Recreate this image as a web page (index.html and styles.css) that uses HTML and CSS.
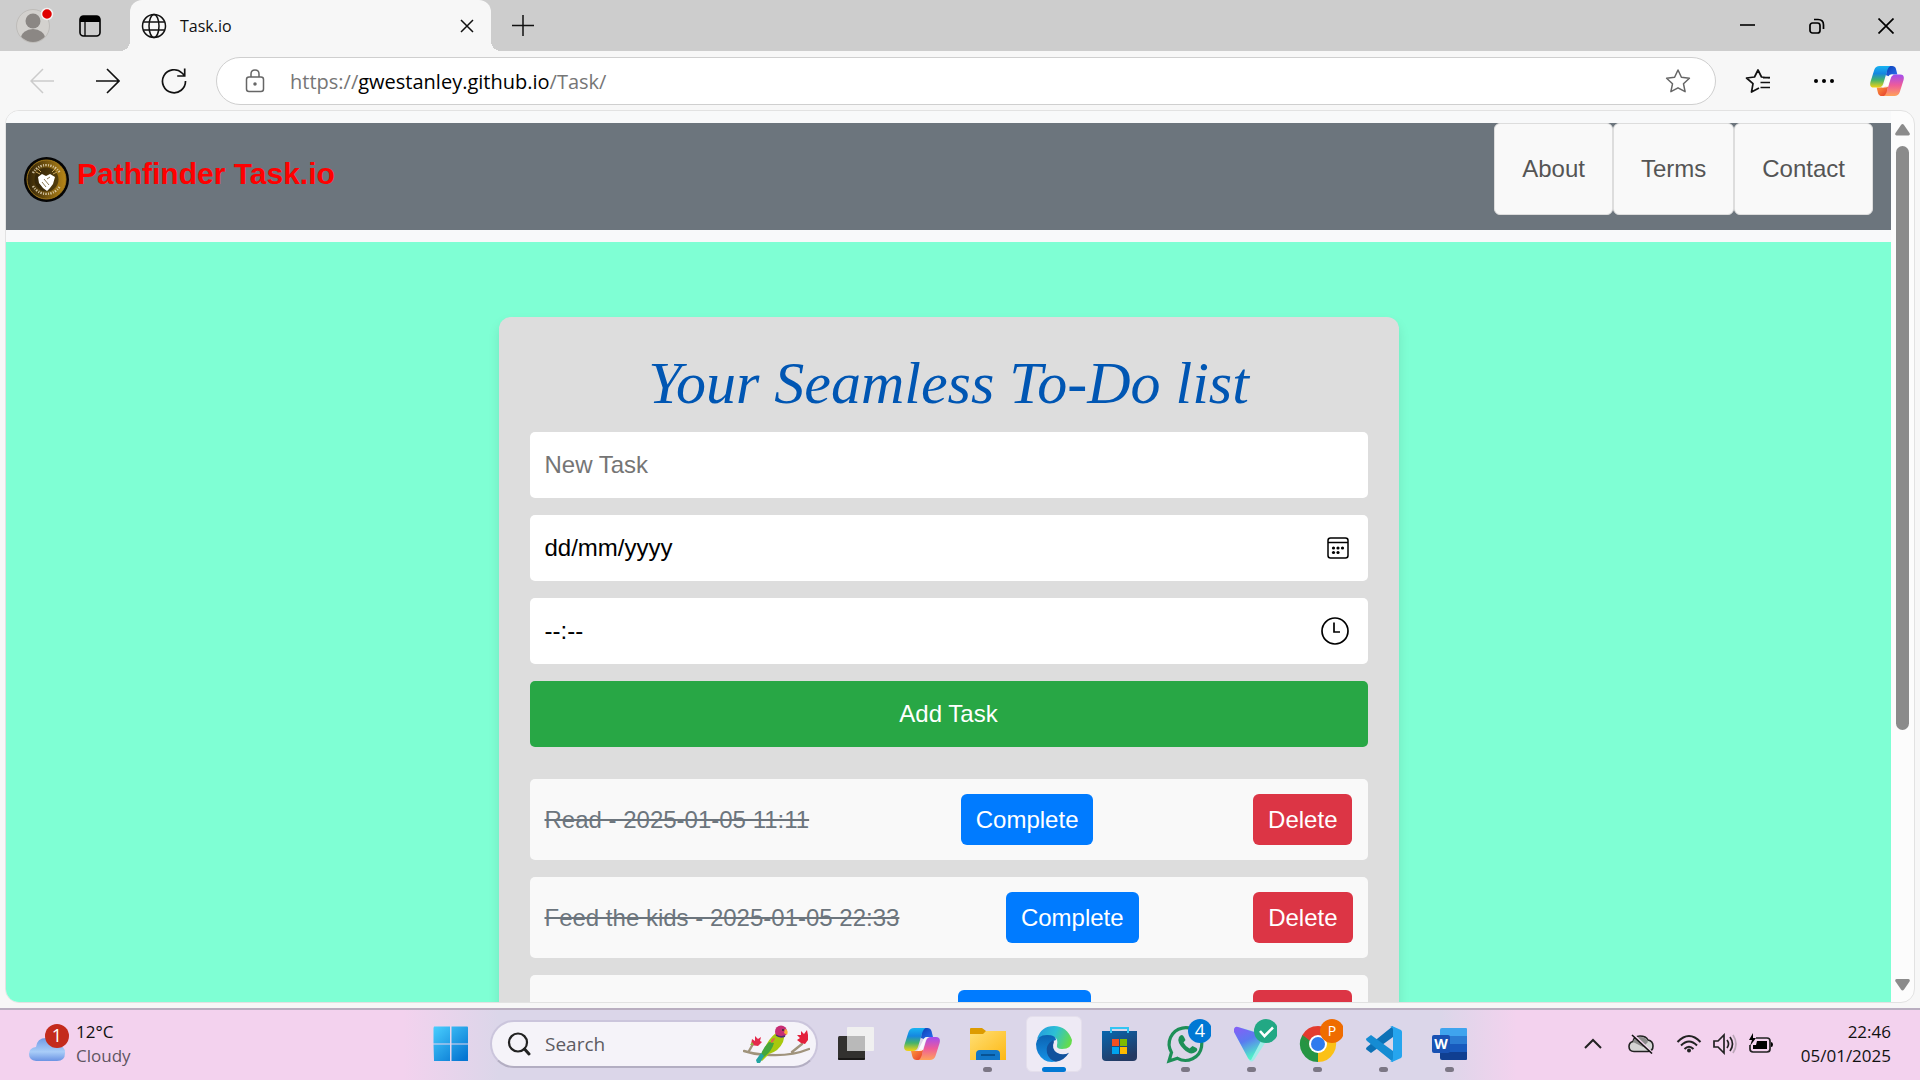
FILE: index.html
```html
<!DOCTYPE html>
<html lang="en-GB">
<head>
<meta charset="utf-8">
<meta name="viewport" content="width=device-width, initial-scale=1">
<title>Task.io</title>
<link rel="stylesheet" href="styles.css">
</head>
<body>
<svg class="defs" width="0" height="0" aria-hidden="true">
  <defs>
    <linearGradient id="cpA" x1="0" y1="0" x2="0" y2="1"><stop offset="0" stop-color="#18b4f2"/><stop offset=".35" stop-color="#1587e0"/><stop offset=".65" stop-color="#45b36b"/><stop offset="1" stop-color="#f5d313"/></linearGradient>
    <linearGradient id="cpB" x1="0" y1="0" x2="0" y2="1"><stop offset="0" stop-color="#a24df0"/><stop offset=".5" stop-color="#ee5b9a"/><stop offset="1" stop-color="#ffa35a"/></linearGradient>
    <linearGradient id="cpC" x1="0" y1="0" x2="1" y2="1"><stop offset="0" stop-color="#0c3fb4"/><stop offset="1" stop-color="#2a6ff0"/></linearGradient>
    <linearGradient id="cpD" x1="0" y1="0" x2="1" y2="1"><stop offset="0" stop-color="#ff9d3c"/><stop offset="1" stop-color="#e5392e"/></linearGradient>
    <symbol id="copilot" viewBox="0 0 36 34">
      <path d="M18 1h5.500q3 0 4 3l1.500 6h-6q-2 0-3 2l-3-1z" fill="url(#cpC)"/>
      <path d="M18 33h-5.500q-3 0-4-3L7 24h6q2 0 3-2l3 1z" fill="url(#cpD)"/>
      <path d="M10 1h11.500q-2 1-3 4L14 20q-1.300 4-5 4H4q-5 0-3.600-6L4.500 5Q6 1 10 1z" fill="url(#cpA)"/>
      <path d="M26 33H14.500q2-1 3-4L22 14q1.300-4 5-4h5q5 0 3.600 6l-4.100 13q-1.500 4-5.500 4z" fill="url(#cpB)"/>
      <path d="M20 11.500q.5-1.500 3-1.500h2q-2.500.5-3.500 4L19 22.500q-.5 1.500-3 1.500h-3.500q2-.5 3.200-4z" fill="#fff" opacity=".85"/>
    </symbol>
  </defs>
</svg>

<header class="tabstrip">
  <button class="profile" aria-label="Profile">
    <svg width="38" height="38" viewBox="0 0 38 38"><clipPath id="pc"><circle cx="17" cy="21" r="16"/></clipPath><circle cx="17" cy="21" r="16.500" fill="#d3d1ce" stroke="#bebcb9"/><g clip-path="url(#pc)" fill="#8b8784"><circle cx="17" cy="16" r="7.500"/><ellipse cx="17" cy="33" rx="12" ry="9"/></g><circle cx="31" cy="9" r="5.500" fill="#e00000" stroke="#f2f2f2" stroke-width="1.500"/></svg>
  </button>
  <button class="tabmenu" aria-label="Tab actions">
    <svg width="22" height="22" viewBox="0 0 22 22"><rect x="1" y="1" width="20" height="20" rx="3.500" fill="none" stroke="#000" stroke-width="1.600"/><path d="M1 7V4q0-3 3-3h14q3 0 3 3v3z"/><path d="M6 6v15" stroke="#000" stroke-width="1.300"/></svg>
  </button>
  <div class="tab">
    <svg width="26" height="26" viewBox="0 0 26 26" fill="none" stroke="#111" stroke-width="1.500"><circle cx="13" cy="13" r="11.500"/><ellipse cx="13" cy="13" rx="5" ry="11.500"/><path d="M2.500 9h21M2.500 17h21"/></svg>
    <span class="tab-title">Task.io</span>
    <button class="tab-close" aria-label="Close tab"><svg width="14" height="14" viewBox="0 0 14 14" stroke="#111" stroke-width="1.500"><path d="M1 1l12 12M13 1L1 13"/></svg></button>
  </div>
  <button class="newtab" aria-label="New tab"><svg width="22" height="22" viewBox="0 0 22 22" stroke="#111" stroke-width="1.500"><path d="M11 0v21M0 10.500h22"/></svg></button>
  <div class="winctl">
    <button aria-label="Minimise"><svg width="16" height="16" viewBox="0 0 16 16" stroke="#000" stroke-width="1.600"><path d="M0 7h15"/></svg></button>
    <button aria-label="Restore"><svg width="16" height="16" viewBox="0 0 16 16" fill="none" stroke="#000" stroke-width="1.700"><rect x="1" y="5" width="10" height="10" rx="2.500"/><path d="M5 1.500h4q5.500 0 5.500 5.500v4"/></svg></button>
    <button aria-label="Close window"><svg width="16" height="16" viewBox="0 0 16 16" stroke="#000" stroke-width="1.700"><path d="M.5.500l15 15M15.500.500l-15 15"/></svg></button>
  </div>
</header>

<nav class="toolbar" aria-label="Browser">
  <button class="tool" aria-label="Back"><svg width="24" height="26" viewBox="0 0 24 26" fill="none" stroke="#cbcbcb" stroke-width="1.500"><path d="M24 13H1M13 1L1 13l12 12"/></svg></button>
  <button class="tool" aria-label="Forward"><svg width="24" height="26" viewBox="0 0 24 26" fill="none" stroke="#111" stroke-width="1.600"><path d="M0 13h23M11 1l12 12-12 12"/></svg></button>
  <button class="tool" aria-label="Reload"><svg width="26" height="26" viewBox="0 0 26 26" fill="none" stroke="#111" stroke-width="1.700"><path d="M24.500 13A11.500 11.500 0 1 1 21 5l2.500 2.500M23.700.500v7.500h-7.500"/></svg></button>
  <div class="address">
    <svg width="20" height="24" viewBox="0 0 20 24" fill="none" stroke="#666" stroke-width="1.500"><rect x="1.500" y="8" width="17" height="14.500" rx="2.500"/><path d="M6 8V5q0-4 4-4t4 4v3"/><circle cx="10" cy="15" r="1" fill="#666"/></svg>
    <span class="url">https://<b>gwestanley.github.io</b>/Task/</span>
    <button class="fav" aria-label="Add to favourites"><svg width="26" height="26" viewBox="0 0 26 26" fill="none" stroke="#666" stroke-width="1.500" stroke-linejoin="round"><path d="M13 2l3.400 7.300 8 1-5.900 5.500 1.600 7.900L13 19.800l-7.100 3.900 1.600-7.900-5.900-5.500 8-1z"/></svg></button>
  </div>
  <button class="tool" aria-label="Favourites"><svg width="26" height="26" viewBox="0 0 26 26" fill="none" stroke="#111" stroke-width="1.700" stroke-linejoin="round"><path d="M14 20l-7.500 4 1.500-8.300L1.500 10l8-1L13 2l3.500 7 8 1M15.500 14.500H25M15.500 19.500H25M18 9.700h7"/></svg></button>
  <button class="tool" aria-label="Settings and more"><svg width="22" height="6" viewBox="0 0 22 6"><circle cx="3" cy="3" r="2"/><circle cx="11" cy="3" r="2"/><circle cx="19" cy="3" r="2"/></svg></button>
  <button class="tool tool-copilot" aria-label="Copilot"><svg width="34" height="32"><use href="#copilot"/></svg></button>
</nav>

<div class="frame">
  <div class="page">
    <header class="site-head">
      <a class="brand" href="#home">
        <svg width="45" height="45" viewBox="0 0 45 45">
          <defs><linearGradient id="gold"><stop offset="0" stop-color="#2e2108"/><stop offset="1" stop-color="#b88717"/></linearGradient></defs>
          <circle cx="22.500" cy="22.500" r="22.500" fill="#050505"/><circle cx="22.500" cy="22.500" r="19.500" fill="url(#gold)" stroke="#a37a1c"/><circle cx="22.500" cy="22.500" r="12" fill="#241a08" opacity=".6"/>
          <path d="M9 16A15.500 15.500 0 0 1 36 16M9 29a15.500 15.500 0 0 0 27 0" fill="none" stroke="#e8dcc0" stroke-width="2.400" stroke-dasharray="1.500 1.300 1 1.200" opacity=".8"/>
          <path d="M14 20l4-3 4 2 4-2 5 3-2 7-3 4-3 3-4-3-4-5z" fill="#fff"/><path d="M18 25l4 5M20 22l5 6M26 20l-3 2" stroke="#8b7a55"/>
          <path d="M12 15l4 2M33 15l-4 2M14 12l3 3M31 12l-3 3" stroke="#c8a55a"/>
        </svg>
        <span>Pathfinder Task.io</span>
      </a>
      <nav class="site-nav" aria-label="Site">
        <a href="#about">About</a>
        <a href="#terms">Terms</a>
        <a href="#contact">Contact</a>
      </nav>
    </header>
    <main class="site-main">
      <section class="card">
        <h1>Your Seamless To-Do list</h1>
        <form class="task-form">
          <div class="field"><input type="text" placeholder="New Task" aria-label="New task"></div>
          <div class="field">
            <input class="dark" type="text" placeholder="dd/mm/yyyy" aria-label="Date">
            <button type="button" aria-label="Show date picker"><svg width="22" height="22" viewBox="0 0 22 22"><rect x="1" y="1" width="20" height="20" rx="2.500" fill="none" stroke="#000" stroke-width="1.500"/><path d="M1 5.500h20" stroke="#000" stroke-width="1.500"/><circle cx="6.500" cy="11" r="1.600"/><circle cx="11" cy="11" r="1.600"/><circle cx="15.500" cy="11" r="1.600"/><circle cx="6.500" cy="15.500" r="1.600"/><circle cx="11" cy="15.500" r="1.600"/></svg></button>
          </div>
          <div class="field">
            <input class="dark" type="text" placeholder="--:--" aria-label="Time">
            <button type="button" aria-label="Show time picker"><svg width="28" height="28" viewBox="0 0 28 28" fill="none" stroke="#000" stroke-width="1.700"><circle cx="14" cy="14" r="13"/><path d="M13 5.500V15h6"/></svg></button>
          </div>
          <button class="add" type="button">Add Task</button>
        </form>
        <ul class="tasks">
          <li><span>Read - 2025-01-05 11:11</span><button class="btn done">Complete</button><button class="btn del">Delete</button></li>
          <li><span>Feed the kids - 2025-01-05 22:33</span><button class="btn done">Complete</button><button class="btn del">Delete</button></li>
          <li><span>Walk - 2025-01-05 11:11</span><button class="btn done">Complete</button><button class="btn del">Delete</button></li>
        </ul>
      </section>
    </main>
  </div>
  <div class="scroll" aria-hidden="true">
    <svg width="15" height="12" viewBox="0 0 15 12" fill="#8b8b8b"><path d="M6 1q1.500-2 3 0l5.500 8q1 2-1 2.500h-12q-2-.5-1-2.500z"/></svg>
    <div class="track"><div class="thumb"></div></div>
    <svg width="15" height="12" viewBox="0 0 15 12" fill="#8b8b8b"><path d="M6 10.500q1.500 2 3 0l5.500-8q1-2-1-2.500h-12q-2 .5-1 2.500z"/></svg>
  </div>
</div>

<footer class="taskbar">
  <div class="weather">
    <svg width="44" height="44" viewBox="0 0 44 44"><defs><linearGradient id="cl" x1="0" y1="0" x2="0" y2="1"><stop offset="0" stop-color="#6f9ae6"/><stop offset=".6" stop-color="#a9cdf8"/><stop offset="1" stop-color="#6a93e3"/></linearGradient></defs><path d="M8 39q-7-1-7-7t7-7q1-9 10-9t10 7q9 0 9 8t-8 8z" fill="url(#cl)"/><circle cx="29" cy="14" r="12" fill="#c42b1c"/><text class="badge-text" x="29" y="20">1</text></svg>
    <div class="weather-text"><span>12°C</span><span class="muted">Cloudy</span></div>
  </div>
  <div class="dock">
    <button class="app" aria-label="Start"><svg width="36" height="36" viewBox="0 0 36 36"><defs><linearGradient id="win" gradientUnits="userSpaceOnUse" x1="0" y1="0" x2="30" y2="34"><stop offset="0" stop-color="#4ad0ff"/><stop offset="1" stop-color="#0676d2"/></linearGradient></defs><path fill="url(#win)" d="M1 .5h16v17H.500V2zM18.500.500h16l.5 1v16H18.500zM.5 18.500H17V35H1zM18.500 18.500H35V35H18.500z"/></svg></button>
    <label class="search">
      <svg width="24" height="24" viewBox="0 0 24 24" fill="none" stroke="#222" stroke-linecap="round"><circle cx="11" cy="10.500" r="9" stroke-width="2.200"/><path d="M17.500 17l4.500 5" stroke-width="3"/></svg>
      <input type="search" placeholder="Search" aria-label="Search">
      <svg width="67" height="38" viewBox="0 0 67 38">
        <path d="M1 26q12 4 26 4 22 1 39-6M49 27l10-8M6 26l4-7" fill="none" stroke="#a0937c" stroke-width="2.400" stroke-linecap="round"/>
        <path d="M8 20l1-6 3 2 0-5 3 3 3-2-1 4 2 1-4 4z" fill="#e42a4c"/><path d="M7 20l2-3 2 3z" fill="#8db843"/>
        <path d="M58 18l-4-3 3-2-3-3 4 0 0-4 3 3 3-4 1 5 0 5-3 4z" fill="#e3203c"/>
        <path d="M33 8q-8 6-12 17l-5 9 3 2 7-7q10-3 14-12l2-8z" fill="#a8c80e"/><path d="M26 17q-7 7-8 13l-3 6 6-4q8-6 10-14z" fill="#44a63c"/><path d="M18 28l-5 7 1 3h3l4-7z" fill="#23a5a2"/><path d="M28 16q1-3 4-3-1 4-4 5z" fill="#e0654c"/>
        <circle cx="38" cy="6.500" r="6" fill="#c72d74"/><path d="M33 10q4 3 9 1" stroke="#493073" stroke-width="1.500" fill="none"/><path d="M42 4q4 1 2 6l-3-2z" fill="#f9b038"/><circle cx="40" cy="5" r="1" fill="#333"/>
      </svg>
    </label>
    <button class="app" aria-label="Task view"><svg width="36" height="36" viewBox="0 0 36 36"><rect y="10" width="27" height="24" rx="1.500" fill="#32312f"/><rect x="9" y="1" width="27" height="24" rx="1" fill="#f0f0f0"/><path d="M9 10h18v15H9z" fill="#b9b9b9"/><path d="M0 33h27" stroke="#000"/></svg></button>
    <button class="app" aria-label="Copilot"><svg width="36" height="34"><use href="#copilot"/></svg></button>
    <button class="app open" aria-label="File Explorer"><svg width="36" height="36" viewBox="0 0 36 36"><defs><linearGradient id="fo" x2="1" y2="1"><stop offset="0" stop-color="#ffdf75"/><stop offset="1" stop-color="#fdb813"/></linearGradient></defs><path d="M0 3q0-1 1-1h11l4 3h20v7H0z" fill="#dd9b00"/><path d="M0 8h13l3-3h20v29H0z" fill="url(#fo)"/><path d="M6 34V28q0-4 4-4h16q4 0 4 4v6z" fill="#1176c8"/><path d="M11 29h14" stroke="#064a86" stroke-width="1.600"/></svg></button>
    <button class="app open active" aria-label="Microsoft Edge"><svg width="36" height="36" viewBox="0 0 36 36"><defs><linearGradient id="eg" x1="0" y1=".2" x2="1" y2=".5"><stop offset="0" stop-color="#2499df"/><stop offset=".5" stop-color="#2dc0d5"/><stop offset="1" stop-color="#64dc4b"/></linearGradient><linearGradient id="eb" x1="0" y1="0" x2="0" y2="1"><stop offset="0" stop-color="#0b62b2"/><stop offset="1" stop-color="#1692e6"/></linearGradient></defs><path d="M1 13Q5 0 18 0t18 14q0 9-10 9-6 0-5-4 2-9-8-9Q6 10 1 13z" fill="url(#eg)"/><path d="M0 18Q1 9 11 9q9 0 9 5-6 1-7 9-1 8 7 12.500Q8 38 2 27 0 23 0 18z" fill="url(#eb)"/><path d="M17 14q-8 5-6 13 2 7 9 8.800 8-1 13-9-6 3-12 0-6-4-3-11z" fill="#11519d"/></svg></button>
    <button class="app" aria-label="Microsoft Store"><svg width="36" height="36" viewBox="0 0 36 36"><defs><linearGradient id="st" x2=".5" y2="1"><stop offset="0" stop-color="#0867af"/><stop offset="1" stop-color="#243a63"/></linearGradient></defs><path d="M0 5h35v26q0 4-4 4H4q-4 0-4-4z" fill="url(#st)"/><path d="M9 7V2h17v5" fill="none" stroke="#33c5f3" stroke-width="2"/><path d="M10 13h7v7h-7z" fill="#f25022"/><path d="M18 13h7v7h-7z" fill="#7fba00"/><path d="M10 21h7v7h-7z" fill="#00a4ef"/><path d="M18 21h7v7h-7z" fill="#ffb900"/></svg></button>
    <button class="app open" aria-label="WhatsApp"><svg width="50" height="50" viewBox="0 0 50 50"><path d="M8 42l2.500-8.500a16.300 16.300 0 1 1 6 5.800z" fill="none" stroke="#1d8f57" stroke-width="3.200"/><path d="M18 18q3-4 5 0l1.500 3-2 2.500q2 4 6 6l3-2.500 4 2q2 2-1 4-5 4-12-3-7-7-4.500-12z" fill="#1d8f57"/><circle cx="39" cy="12" r="12" fill="#0078d4"/><text class="badge-text" x="39" y="18">4</text></svg></button>
    <button class="app open" aria-label="VPN"><svg width="50" height="50" viewBox="0 0 50 50"><defs><linearGradient id="vp" x2=".4" y2="1"><stop offset="0" stop-color="#8a5cf7"/><stop offset=".5" stop-color="#5a7bf0"/><stop offset="1" stop-color="#4ff0c8"/></linearGradient></defs><path d="M7 10q1-3 4-2l26 7q5 2 3 6L27 41q-3 3-5 0L7 13z" fill="#9deee8"/><path d="M7 10q1-3 4-2l23 7q3 2 1 5L24 41q-2 0-3-2L7 13z" fill="url(#vp)"/><circle cx="39" cy="12" r="12" fill="#22a884"/><path d="M33 12l4.500 5 8.500-8.500" fill="none" stroke="#fff" stroke-width="2.600"/></svg></button>
    <button class="app open" aria-label="Google Chrome"><svg width="50" height="50" viewBox="0 0 50 50"><path d="M25 25L9.400 16A18 18 0 0 1 40.600 16z" fill="#e33b2e"/><path d="M25 25l15.600-9A18 18 0 0 1 25 43z" fill="#fbc116"/><path d="M25 25v18A18 18 0 0 1 9.400 16z" fill="#259543"/><path d="M25 16h15.600L31 25zM17 29L9.400 16 22 18z" fill="#e33b2e"/><path d="M9.400 16L17 29.500l5-4z" fill="#259543"/><path d="M25 43l8-14-6-3z" fill="#fbc116"/><circle cx="25" cy="25" r="9" fill="#fff"/><circle cx="25" cy="25" r="7" fill="#2e7bee"/><circle cx="39" cy="12" r="12" fill="#ef6c00"/><text class="badge-text small" x="39" y="17">P</text></svg></button>
    <button class="app open" aria-label="Visual Studio Code"><svg width="36" height="36" viewBox="0 0 36 36"><path d="M27 0v11L5 27l-4-3q-2-1 0-3z" fill="#0c71b6"/><path d="M27 36V25L5 9 1 12q-2 1 0 3z" fill="#158cd3"/><path d="M26 0l9 4q1 1 1 2v24q0 1-1 2l-9 4-2-1q3 0 3-3V4q0-3-3-3z" fill="#26a5ee"/></svg></button>
    <button class="app open" aria-label="Word"><svg width="36" height="36" viewBox="0 0 36 36"><path d="M8 4q0-2 2-2h24q1 0 1 1v7H8z" fill="#3fa4ee"/><path d="M8 10h27v8H8z" fill="#2b7cd3"/><path d="M8 18h27v8H8z" fill="#185abd"/><path d="M8 26h27v7q0 1-1 1H10q-2 0-2-2z" fill="#103f91"/><rect y="9" width="18" height="18" rx="2" fill="#1952b3"/><text class="word-text" x="9" y="23">W</text></svg></button>
  </div>
  <div class="tray">
    <button aria-label="Show hidden icons"><svg width="18" height="12" viewBox="0 0 18 12" fill="none" stroke="#222" stroke-width="2"><path d="M1 10l8-8 8 8"/></svg></button>
    <button aria-label="OneDrive"><svg width="26" height="20" viewBox="0 0 26 20"><path d="M6 17.500q-5 0-5-5 0-4 4-5Q6 2 12 2t8 4q5 1 5 6 0 5-5 5.500z" fill="#d4d4d4" stroke="#222" stroke-width="1.600"/><path d="M5 8q1-5 7-5t8 5l-5 5z" fill="#8b8b8b"/><path d="M5 0l19 18.500" stroke="#f3d3ee" stroke-width="2"/><path d="M4 1l20 18.500" stroke="#111" stroke-width="1.600"/></svg></button>
    <button aria-label="Network"><svg width="26" height="20" viewBox="0 0 26 20" fill="none" stroke="#222" stroke-width="2"><path d="M1.500 8q11.500-12 23 0M5 11.500q8-8 16 0M8.500 15q4.500-4.500 9 0"/><circle cx="13" cy="16.500" r="2" fill="#222" stroke="none"/></svg></button>
    <button aria-label="Volume"><svg width="24" height="22" viewBox="0 0 24 22" fill="none" stroke="#222" stroke-width="1.700"><path d="M1 8h4l6-6v18l-6-6H1zM14 7q3 4 0 8M17 4q5 7 0 14"/><path d="M20 2q6 9 0 18" stroke="#bba7b8"/></svg></button>
    <button aria-label="Battery"><svg width="26" height="22" viewBox="0 0 26 22"><path d="M8 5h11q3 0 3 3v8q0 3-3 3H5q-3 0-3-3v-4" fill="none" stroke="#222" stroke-width="1.700"/><path d="M9 8h10v8H5v-4h3zM23 9q2 0 2 2.500T23 14z"/><path d="M5 0L1 7h3l-2 6 6-8H5z"/></svg></button>
    <div class="clock"><span>22:46</span><span>05/01/2025</span></div>
  </div>
</footer>
</body>
</html>
```
FILE: styles.css
```css
* { box-sizing: border-box; }
html, body { height: 100%; }
body {
  margin: 0;
  display: flex;
  flex-direction: column;
  overflow: hidden;
  background: #f7f7f7;
  font-family: "Open Sans", "Noto Sans", sans-serif;
  color: #111;
}
button { border: 0; padding: 0; background: none; font: inherit; color: inherit; }
input { border: 0; outline: 0; font: inherit; }
a { text-decoration: none; }
svg { display: block; flex: none; }
.defs { position: absolute; }

/* Tab strip */
.tabstrip { flex: none; display: flex; align-items: center; height: 51px; padding-left: 16px; background: #cdcdcd; }
.profile { margin-bottom: 4px; }
.tabmenu { margin-left: 25px; }
.tab {
  position: relative;
  display: flex;
  align-items: center;
  width: 361px;
  height: 51px;
  margin-left: 29px;
  padding: 0 17px 0 11px;
  border-radius: 12px 12px 0 0;
  background: #f7f7f7;
}
.tab::before, .tab::after { content: ""; position: absolute; bottom: 0; width: 10px; height: 10px; }
.tab::before { right: 100%; background: radial-gradient(circle at 0 0, #cdcdcd 10px, #f7f7f7 10px); }
.tab::after { left: 100%; background: radial-gradient(circle at 100% 0, #cdcdcd 10px, #f7f7f7 10px); }
.tab-title { flex: 1; margin-left: 13px; font-size: 16px; }
.newtab { margin-left: 21px; }
.winctl { display: flex; margin-left: auto; }
.winctl button { display: grid; place-items: center; width: 69px; height: 51px; }

/* Browser toolbar */
.toolbar { flex: none; display: flex; align-items: center; height: 59px; padding: 0 3px 0 9px; }
.tool { display: grid; place-items: center; width: 66px; height: 48px; }
.tool-copilot { width: 60px; }
.address {
  flex: 1;
  display: flex;
  align-items: center;
  height: 48px;
  margin: 0 9px;
  padding: 0 24px 0 28px;
  border: 1px solid #cfcfcf;
  border-radius: 24px;
  background: #fff;
}
.url { flex: 1; margin-left: 25px; padding-top: 2px; font-size: 20px; color: #767676; }
.url b { font-weight: 400; color: #000; }

/* Web page viewport */
.frame {
  flex: 1;
  min-height: 0;
  display: flex;
  margin: 0 5px 5px;
  border: 1px solid #e2e2e2;
  border-radius: 14px;
  overflow: hidden;
  background: #fcfcfc;
  font-family: "Liberation Sans", Arial, sans-serif;
  font-size: 24px;
}
.page { flex: 1; overflow: hidden; padding-top: 12px; background: #f8f9fa; }
.scroll { display: flex; flex-direction: column; align-items: center; width: 23px; padding: 13px 0 11px; }
.track { flex: 1; width: 13px; padding: 10px 0; }
.thumb { height: 71%; border-radius: 7px; background: #8b8b8b; }

.site-head { display: flex; justify-content: space-between; align-items: flex-start; height: 107px; padding: 0 18px; background: #6c757d; }
.brand { display: flex; gap: 8px; padding-top: 34px; font-size: 30px; font-weight: 700; line-height: 34px; color: #f00; }
.site-nav { display: flex; }
.site-nav a { padding: 27px; line-height: 36px; color: #555; background: #f9f9f9; border: 1px solid #ddd; border-radius: 6px; }

.site-main { margin-top: 12px; padding: 75px 30px; background: #7fffd4; }
.card { max-width: 900px; margin: 0 auto; padding: 31px; border-radius: 12px; background: #ddd; box-shadow: 0 6px 12px rgba(0, 0, 0, .1); }
.card h1 { margin: 0 0 13px; font: italic 400 60px/71px "Liberation Serif", "Times New Roman", serif; text-align: center; color: #0056b3; }
.task-form { display: grid; gap: 17px; }
.field { display: flex; align-items: center; height: 66px; padding: 0 19px 0 15px; border-radius: 5px; background: #fff; }
.field input { flex: 1; min-width: 0; padding: 0; background: none; }
.field input::placeholder { color: #757575; opacity: 1; }
.field input.dark::placeholder { color: #000; }
.add { height: 66px; border-radius: 5px; background: #28a745; color: #fff; }
.tasks { display: grid; gap: 17px; margin: 32px 0 0; padding: 0; list-style: none; }
.tasks li { display: flex; justify-content: space-between; align-items: center; height: 81px; padding: 0 15px; border-radius: 5px; background: #f9f9f9; }
.tasks span { color: #6c757d; text-decoration: line-through; }
.btn { height: 51px; padding: 0 15px; border-radius: 6px; color: #fff; }
.done { background: #007bff; }
.del { margin-left: 8px; background: #dc3545; }

/* Taskbar */
.taskbar {
  flex: none;
  display: grid;
  grid-template-columns: 1fr auto 1fr;
  align-items: center;
  height: 72px;
  padding-bottom: 2px;
  border-top: 2px solid #b9aec0;
  background: linear-gradient(90deg, #f3d2ee 21%, #dbd6e9 26%, #dbd6e9 75%, #f3d2ee 79%);
  font-size: 17px;
}
.weather { display: flex; align-items: center; gap: 4px; padding-left: 28px; }
.weather-text, .clock { display: grid; line-height: 24px; }
.muted { color: #5f5562; }
.badge-text { font: 18px "Open Sans", sans-serif; fill: #fff; text-anchor: middle; }
.badge-text.small { font-size: 14px; }
.word-text { font: 700 14px "Open Sans", sans-serif; fill: #fff; text-anchor: middle; }
.dock { display: flex; align-items: center; padding-right: 19px; }
.app { position: relative; display: grid; place-items: center; width: 66px; height: 56px; }
.app svg { position: relative; }
.app.active::before { content: ""; position: absolute; inset: 0 5px; border: 1px solid #e4dfec; border-radius: 6px; background: #eeeaf5; }
.app.open::after { content: ""; position: absolute; bottom: 0; left: 28px; width: 9px; height: 5px; border-radius: 3px; background: #7c7785; }
.app.open.active::after { left: 21px; width: 24px; background: #0078d4; }
.search {
  display: flex;
  align-items: center;
  width: 328px;
  height: 48px;
  margin: 0 5px 0 6px;
  padding: 0 6px 0 15px;
  border: 2px solid #cbc5dc;
  border-bottom-color: #b3aec2;
  border-radius: 24px;
  background: #f5f3f9;
}
.search input { flex: 1; min-width: 0; margin-left: 14px; padding: 0; background: none; font-size: 19px; }
.search input::placeholder { color: #5d5b62; opacity: 1; }
.tray { display: flex; align-items: center; justify-content: flex-end; padding-right: 29px; }
.tray button { margin-right: 11px; }
.tray button:nth-child(1) { margin-right: 26px; }
.tray button:nth-child(2) { margin-right: 22px; }
.tray button:nth-child(5) { margin-right: 27px; }
.clock { text-align: right; }
```
